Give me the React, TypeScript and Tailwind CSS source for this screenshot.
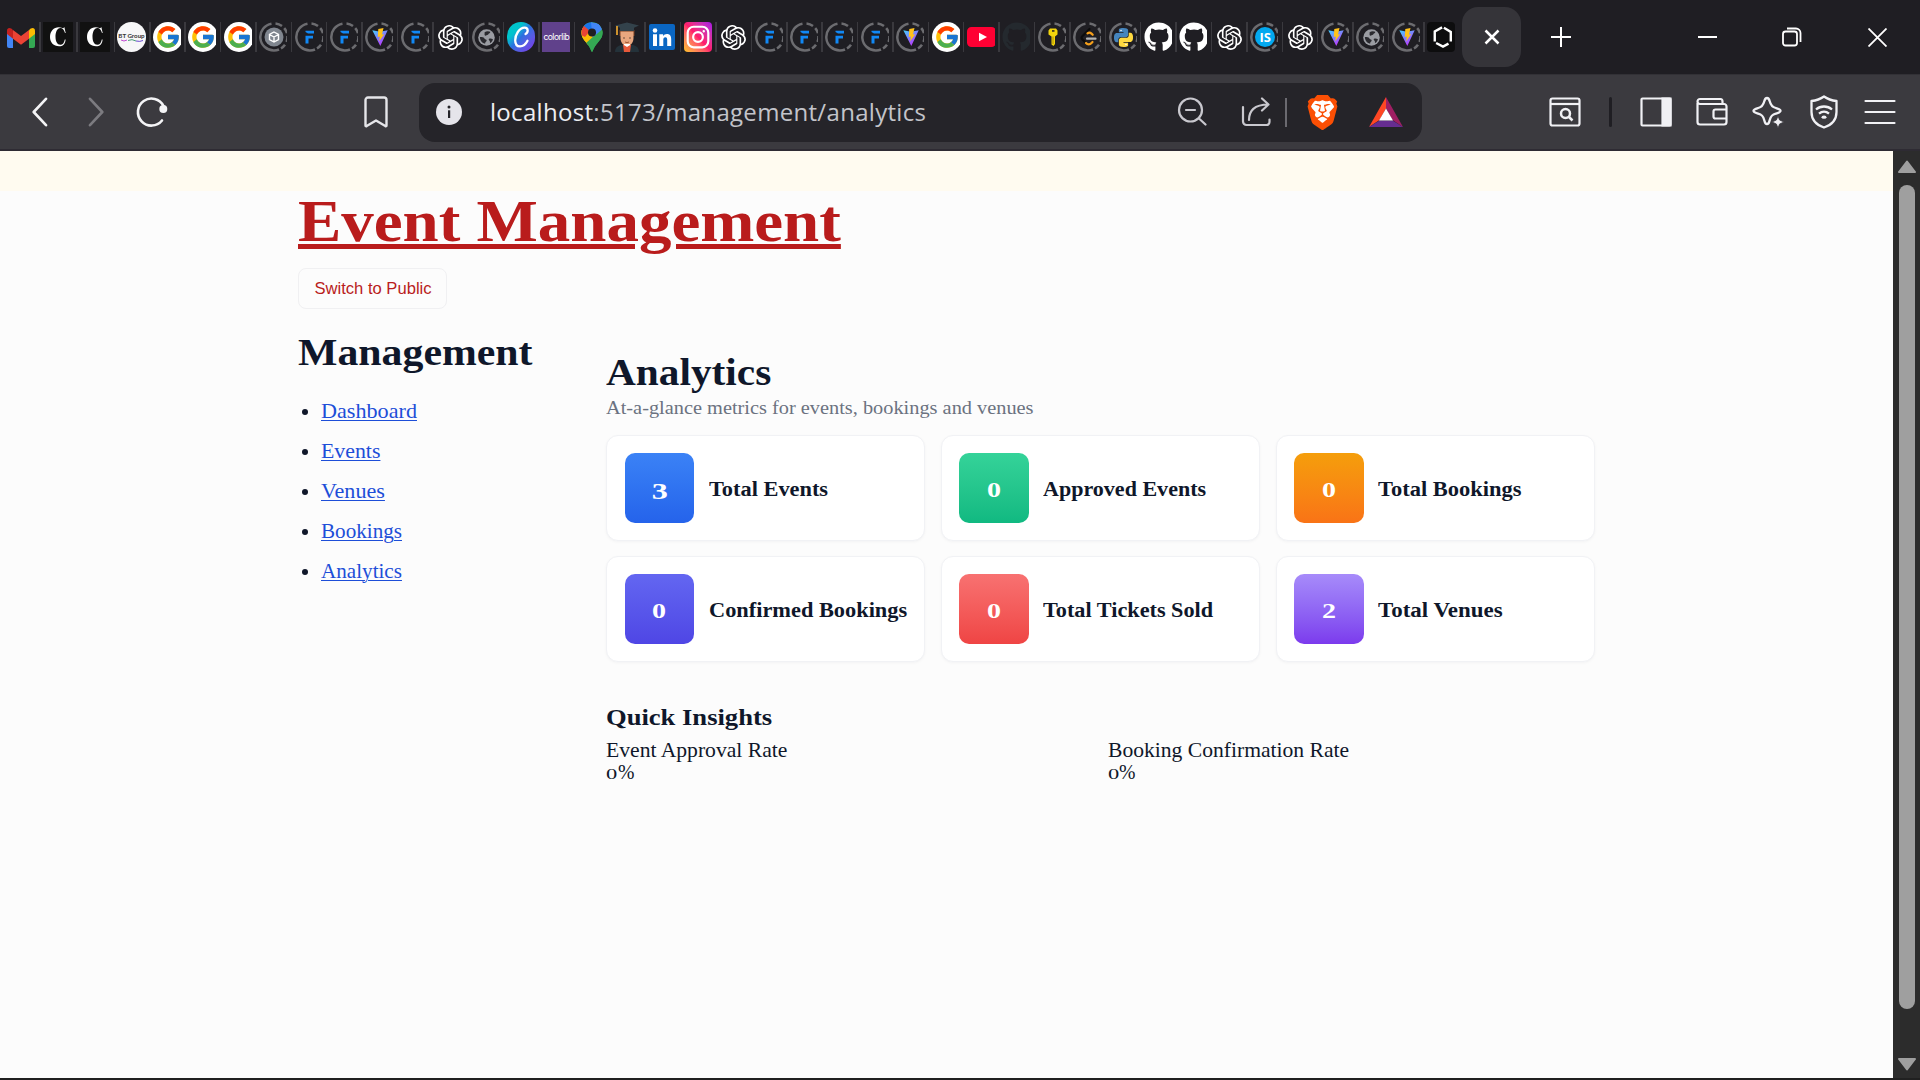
import type { ReactNode } from "react";
import { FcGoogle } from "react-icons/fc";
import { FaGithub } from "react-icons/fa";
import { SiBrave, SiOpenai } from "react-icons/si";

/* ---------- favicons ---------- */

const Gmail = () => (
  <svg viewBox="0 0 28 21" className="h-[21px] w-7">
    <path fill="#4285f4" d="M0 4h6v17H2a2 2 0 0 1-2-2z" />
    <path fill="#34a853" d="M22 4h6v15a2 2 0 0 1-2 2h-4z" />
    <path fill="#fbbc04" d="M22 3.2C24 .2 28 0 28 3.6V7l-6 4.8z" />
    <path fill="#c5221f" d="M6 3.2C4 .2 0 0 0 3.6V7l6 4.8z" />
    <path fill="#ea4335" d="M6 3v8.8l8 6 8-6V3l-8 6z" />
  </svg>
);

const SerifC = () => (
  <div className="flex h-[30px] w-[30px] shrink-0 items-center justify-center bg-[#111]">
    <svg viewBox="0 0 30 30" className="h-[30px] w-[30px]">
      <path
        fill="#fff"
        d="M21.300 5l1.400 6h-.7c-1-3.600-2.700-5.200-4.600-5.100-3.400.2-5 4.300-4.900 9.100.1 4.700 1.800 7.700 4.800 7.700 2.500 0 3.800-1.900 4.500-5.300h.8c-.4 4.700-2.800 6.900-6.500 6.900C10.600 24.300 7 20.500 7 15c0-5.700 3.600-9.700 8.800-9.700 2.300 0 3.500.9 4.300.9.500 0 .8-.5 1.200-1.200z"
      />
    </svg>
  </div>
);

const BtGroup = () => (
  <div className="flex h-[30px] w-[29px] flex-col items-center justify-center rounded-full bg-[#f7f7f8]">
    <span className="font-['Lato'] text-[6.200px] leading-[7px] font-bold text-[#333]">BT Group</span>
    <svg viewBox="0 0 24 3" className="h-[3px] w-6">
      <path d="M1 1q3 2 6 0" stroke="#c04bd0" fill="none" />
      <path d="M8 1.500q4-2 8 .5" stroke="#4a9a7a" fill="none" />
      <path d="M16 2q4 1 7-.5" stroke="#6a4bd0" fill="none" />
    </svg>
  </div>
);

const Google = () => (
  <div className="flex h-[30px] w-[30px] shrink-0 items-center justify-center rounded-full bg-white">
    <FcGoogle className="h-[26px] w-[26px]" />
  </div>
);

const Ring = ({ children }: { children?: ReactNode }) => (
  <div className="relative flex h-[30px] w-[30px] shrink-0 items-center justify-center">
    <svg viewBox="0 0 30 30" className="absolute inset-0 h-[30px] w-[30px]" fill="none" stroke="#6c6c70" strokeWidth="2.500">
      <path d="M15 28.500A13.500 13.500 0 0 1 12.500 1.700" />
      <path d="M16.500 1.600A13.500 13.500 0 0 1 23 4.100M25.200 6.200A13.500 13.500 0 0 1 28 11.200M28.400 14A13.500 13.500 0 0 1 27.600 20M26 22.800A13.500 13.500 0 0 1 22 26.500M20 27.500A13.500 13.500 0 0 1 15 28.500" />
    </svg>
    <div className="relative flex h-5 w-5 items-center justify-center">{children}</div>
  </div>
);

const Cube = () => (
  <Ring>
    <svg viewBox="0 0 20 20" className="h-5 w-5 shrink-0">
      <circle cx="10" cy="10" r="9.500" fill="#80868f" />
      <path d="M10 5l4.500 2.500v5L10 15l-4.500-2.500v-5zM5.500 7.500L10 10l4.500-2.500M10 10v5" fill="none" stroke="#fff" strokeWidth="1.400" />
    </svg>
  </Ring>
);

const Framer = () => (
  <Ring>
    <svg viewBox="0 0 20 20" className="h-5 w-5" fill="#1188f5">
      <path d="M5.500 3.700h8.500v2.800H8L5.500 5zM5.500 8.800H13v2.700H8.500v5h-3z" />
    </svg>
  </Ring>
);

const Vite = () => (
  <Ring>
    <svg viewBox="0 0 20 20" className="h-5 w-5">
      <defs>
        <linearGradient id="vt" x1="0" y1="0" x2=".6" y2="1">
          <stop stopColor="#41d1ff" />
          <stop offset="1" stopColor="#bd34fe" />
        </linearGradient>
      </defs>
      <path fill="url(#vt)" d="M2.300 3.300L10 4.700l7.700-1.400L10.300 19z" />
      <path fill="#ffc21a" d="M13.500 1L8.300 2l-.5 8 2-.4-.6 4.600 5-7-2.200.4z" />
    </svg>
  </Ring>
);

const OpenAi = () => (
  <div className="flex h-[30px] w-[29px] shrink-0 items-center justify-center">
    <SiOpenai className="h-[25px] w-[25px] text-white" />
  </div>
);

const Globe = () => (
  <Ring>
    <svg viewBox="0 0 20 20" className="h-[19px] w-[19px]">
      <circle cx="10" cy="10" r="8.700" fill="#9a9ca2" />
      <path fill="#2a2a2f" d="M3 9.500c2.500 0 4.500.3 5 1.700.5 1.300 2.200.3 2.200 2 0 1.200-1.700 1-1.700 3.300C5.500 16 3 13 3 9.500zM8 4.500c1.800-1.300 4-1.500 6-.5 0 1.700-1.500 1.500-2 2.500s-2 .5-2.500 1.500c-.5.700-2-.3-1.500-1.300zM12.500 11.500c1.200-.8 3-.3 4.300.3-.5 1.900-1.500 3.200-3 4-.5-1.300.2-2-.6-2.500-.7-.5-1.200-1.300-.7-1.800z" />
    </svg>
  </Ring>
);

const Canva = () => (
  <div className="flex h-[30px] w-7 items-center justify-center rounded-full bg-linear-to-br from-[#00c4cc] from-30% via-[#2b6fe0] to-[#7d2ae8]">
    <svg viewBox="0 0 28 30" className="h-[30px] w-7">
      <path
        fill="none"
        stroke="#fff"
        strokeWidth="2.300"
        strokeLinecap="round"
        d="M18.500 12c3-1.500 3-6.300-.8-6.300-5.700 0-9.500 7.300-9.500 12.500 0 4 1.800 6.200 4.800 6.200 3.500 0 6-2.600 7.500-5.600"
      />
    </svg>
  </div>
);

const Colorlib = () => (
  <div className="flex h-[30px] w-7 items-center justify-center overflow-hidden bg-[#60418b]">
    <span className="font-['Inter'] text-[8.500px] tracking-[-0.500px] text-white">colorlib</span>
  </div>
);

const Maps = () => (
  <svg viewBox="0 0 22 30" className="h-[30px] w-[22px]">
    <defs>
      <clipPath id="pin">
        <path d="M11 .3C4.800.3.500 5 .5 10.800c0 4.300 2.200 7 5 10.200 2.200 2.600 4 5.200 4.700 8 .3 1 1.300 1 1.600 0 .7-2.800 2.500-5.400 4.700-8 2.800-3.200 5-5.900 5-10.200C21.500 5 17.200.3 11 .3z" />
      </clipPath>
    </defs>
    <g clipPath="url(#pin)">
      <path fill="#34a853" d="M0 0h22v30H0z" />
      <path fill="#fbbc04" d="M0 6v18L16 8z" />
      <path fill="#fbbc04" d="M0 8L8 8l9 4-12 13H0z" />
      <path fill="#34a853" d="M22 6L4.500 21.500 10 30h12z" />
      <path fill="#4285f4" d="M8 12L19 0l3 7-10 8z" />
      <path fill="#34a853" d="M22 6l-7 8-4 4h11z" />
      <path fill="#1a73e8" d="M3 0h8l3 5-4 6-7-5z" />
      <path fill="#4285f4" d="M10 0l10 2-9 9z" />
      <path fill="#ea4335" d="M0 3l3 1 6 5-5 6-4-2z" />
      <circle cx="11" cy="10.500" r="4" fill="#1f1e23" />
    </g>
  </svg>
);

const Graduate = () => (
  <svg viewBox="0 0 24 30" className="h-[30px] w-6">
    <path fill="#24323a" d="M0 30c0-5 4-7 7-7h10c3 0 7 2 7 7z" />
    <path fill="#e8593a" d="M8 23h8l-1 7H9z" />
    <path fill="#7a3f22" d="M4.500 8h15v6h-15z" />
    <path fill="#e9a77f" d="M5.500 9.500h13V16c0 4-2.500 8-6.500 8s-6.500-4-6.500-8z" />
    <path fill="#fff" d="M9 23l3 2 3-2v-1H9z" />
    <path fill="#33424b" d="M0 3.500L12 .5l12 3-5 2.200V9H5V5.700z" />
    <path d="M2 4v9" stroke="#e0a030" strokeWidth="1.800" />
    <path d="M9 15.500v1M15 15.500v1" stroke="#3a2a20" strokeWidth="1.400" />
    <path d="M10 20q2 1.200 4 0" stroke="#a0522d" fill="none" />
  </svg>
);

const LinkedIn = () => (
  <svg viewBox="0 0 26 26" className="h-[26px] w-[26px]">
    <rect width="26" height="26" rx="2" fill="#0a66c2" />
    <circle cx="6" cy="6.500" r="2.300" fill="#fff" />
    <path fill="#fff" d="M4 10.300h4V22H4zM10.300 10.300h3.800v1.700c.8-1.300 2-2 3.800-2 3.300 0 4.300 2.200 4.300 5.500V22h-4v-5.900c0-1.600-.3-2.800-1.800-2.800-1.600 0-2.100 1.200-2.100 2.800V22h-4z" />
  </svg>
);

const Instagram = () => (
  <div className="flex h-[30px] w-7 items-center justify-center rounded-[4px] bg-linear-to-tr from-[#ffc21a] via-[#ff1a6c] to-[#a800e8]">
    <svg viewBox="0 0 24 24" className="h-[26px] w-[26px]" fill="none" stroke="#fff" strokeWidth="2">
      <rect x="2.500" y="2.500" width="19" height="19" rx="5.500" />
      <circle cx="12" cy="12" r="4.500" />
      <circle cx="17.300" cy="6.700" r=".6" fill="#fff" strokeWidth="1" />
    </svg>
  </div>
);

const YouTube = () => (
  <svg viewBox="0 0 28 20" className="h-5 w-7">
    <rect width="29" height="20" rx="4.500" fill="#ff0033" />
    <path fill="#fff" d="M12 5.700l8 4.300-8 4.300z" />
  </svg>
);

const KeyIcon = () => (
  <Ring>
    <svg viewBox="0 0 20 20" className="h-5 w-5">
      <path fill="#f3d50c" d="M7 1.500h6l1.500 2v4L12 9.500V17l-1.500 2L8.500 17.500V9.500l-3-2v-4z" />
      <path fill="#1f1e23" d="M9 3.200h2.500v1.500H9z" />
      <path fill="#b08f00" d="M9.500 9.500h1V17h-1z" />
    </svg>
  </Ring>
);

const LeetCode = () => (
  <Ring>
    <svg viewBox="0 0 20 20" className="h-5 w-5" fill="none" strokeWidth="2.200" strokeLinecap="round">
      <path stroke="#0c0c0d" d="M11.500 2L4.300 9.200c-1 1-1 2.200 0 3.200L8 16" />
      <path stroke="#f59f1b" d="M8 16c1.500 1.800 4 1.800 5.500 0l1-1M9.500 6.300c1.300-1 3-.7 4 .3l1.200 1.200" />
      <path stroke="#b3b3b3" d="M9 11.700h8.500" />
    </svg>
  </Ring>
);

const snake =
  "M14.250.180l.900.200.730.260.590.300.450.320.340.340.250.340.160.330.100.300.040.260.020.200-.010.130V8.500l-.050.630-.130.550-.210.460-.260.380-.300.310-.330.250-.350.190-.350.140-.330.100-.300.070-.260.040-.210.020H8.770l-.690.050-.590.140-.500.220-.410.270-.330.320-.270.350-.200.360-.150.370-.100.350-.070.320-.040.270-.020.210v3.060H3.170l-.210-.030-.280-.070-.320-.120-.350-.180-.360-.260-.360-.360-.350-.460-.320-.590-.280-.730-.210-.880-.140-1.050-.050-1.230.060-1.220.160-1.040.240-.870.320-.710.360-.570.400-.440.420-.330.420-.240.400-.160.360-.100.320-.050.240-.010h8.380v-.830H6.180l-.010-2.750-.020-.370.050-.340.110-.310.170-.280.250-.260.310-.230.380-.200.440-.180.510-.150.580-.120.640-.100.710-.060.770-.040.840-.020z";

const Python = () => (
  <Ring>
    <svg viewBox="0 0 24 24" className="h-[19px] w-[19px]">
      <path fill="#4585bd" d={snake} />
      <path fill="#ffd940" d={snake} transform="rotate(180 12 12)" />
      <circle cx="8.900" cy="3.200" r="1" fill="#fff" />
      <circle cx="15.100" cy="20.800" r="1" fill="#fff" />
    </svg>
  </Ring>
);

const GitHub = () => <FaGithub className="h-[30px] w-[30px] shrink-0 text-white" />;
const GitHubDim = () => <FaGithub className="h-[30px] w-[30px] shrink-0 text-[#24292e]" />;

const InfoSoft = () => (
  <Ring>
    <div className="flex h-5 w-5 shrink-0 items-center justify-center rounded-full bg-[#03a9f0]">
      <span className="font-['Open_Sans'] text-[13px] leading-none font-bold text-white">IS</span>
    </div>
  </Ring>
);

const Hexagon = () => (
  <div className="flex h-[30px] w-7 items-center justify-center rounded-[4px] bg-[#0d0d0e]">
    <svg viewBox="0 0 24 26" className="ml-[3px] h-6 w-[22px]" fill="none" stroke="#fff" strokeWidth="2.600">
      <path d="M11 2.500L3 7v11M4.500 19.500L12 23.500l6-3.300M20.500 18V7.500L13 3" />
    </svg>
  </div>
);

const favicons = [
  Google, Google, Google, Cube, Framer, Framer, Vite, Framer, OpenAi, Globe, Canva, Colorlib, Maps,
  Graduate, LinkedIn, Instagram, OpenAi, Framer, Framer, Framer, Framer, Vite, Google, YouTube,
  GitHubDim, KeyIcon, LeetCode, Python, GitHub, GitHub, OpenAi, InfoSoft, OpenAi, Vite, Globe, Vite, Hexagon,
];

const centered = new Set([Maps, Graduate, LinkedIn]);

const Divider = () => <div className="h-[30px] w-[1.500px] shrink-0 bg-[#3a393e]" />;

const TabStrip = () => (
  <div className="flex h-[74px] items-center bg-[#1f1e23]">
    <div className="flex w-[39px] shrink-0 pl-[7px]"><Gmail /></div>
    <Divider />
    <div className="flex w-[35.500px] shrink-0 pl-[2.500px]"><SerifC /></div>
    <Divider />
    <div className="flex w-[36px] shrink-0 pl-[2.500px]"><SerifC /></div>
    <Divider />
    <div className="flex w-[34px] shrink-0 pl-[2px]"><BtGroup /></div>
    {favicons.map((Icon, i) => (
      <div key={i} className="flex w-[35.400px] shrink-0 items-center">
        <Divider />
        <div
          className={
            centered.has(Icon)
              ? "ml-[2.500px] flex h-[30px] w-7 items-center justify-center overflow-hidden"
              : "ml-[2.500px] flex h-[30px] w-7 items-center overflow-hidden"
          }
        >
          <Icon />
        </div>
      </div>
    ))}
    <div className="ml-1 flex h-[60px] w-[59px] shrink-0 items-center justify-center rounded-2xl bg-[#353439]">
      <svg viewBox="0 0 16 16" className="h-4 w-4" stroke="#fff" strokeWidth="2.500"><path d="M1.500 1.500l13 13M14.500 1.500l-13 13" /></svg>
    </div>
    <svg viewBox="0 0 20 20" className="ml-[30px] h-5 w-5 shrink-0" stroke="#fff" strokeWidth="2"><path d="M10 0v20M0 10h20" /></svg>
    <div className="ml-auto flex shrink-0 items-center pr-[33px]">
      <svg viewBox="0 0 20 20" className="mr-[64px] h-5 w-5" stroke="#fff" strokeWidth="2"><path d="M0 10h19" /></svg>
      <svg viewBox="0 0 20 20" className="mr-[66px] h-5 w-5" fill="none" stroke="#fff" strokeWidth="1.800">
        <rect x="1" y="4.500" width="14" height="14" rx="2.500" />
        <path d="M5 1.500h9a4.500 4.500 0 0 1 4.500 4.500v9" />
      </svg>
      <svg viewBox="0 0 19 19" className="h-[19px] w-[19px]" stroke="#fff" strokeWidth="1.800"><path d="M.5.500l18 18M18.500.500l-18 18" /></svg>
    </div>
  </div>
);

/* ---------- toolbar ---------- */

const Toolbar = () => (
  <div className="flex h-[77px] items-center border-t border-b-2 border-t-[#323136] border-b-[#2e2b33] bg-[#3b3a3f]">
    <svg viewBox="0 0 16 30" className="ml-[32px] h-[30px] w-4 shrink-0" fill="none" stroke="#f4f4f6" strokeWidth="2.600" strokeLinecap="round" strokeLinejoin="round"><path d="M14 1.800L1.700 15 14 28.200" /></svg>
    <svg viewBox="0 0 16 30" className="ml-10 h-[30px] w-4 shrink-0" fill="none" stroke="#7c7b80" strokeWidth="2.600" strokeLinecap="round" strokeLinejoin="round"><path d="M2 1.800L14.300 15 2 28.200" /></svg>
    <svg viewBox="0 0 32 32" className="ml-8 h-8 w-8 shrink-0" fill="none" stroke="#f4f4f6" strokeWidth="2.600" strokeLinecap="round">
      <path d="M26 24.500A13.500 13.500 0 1 1 27.500 10" />
      <circle cx="27.300" cy="13" r="4" fill="#f4f4f6" stroke="none" />
    </svg>
    <svg viewBox="0 0 24 32" className="ml-[196px] h-8 w-6 shrink-0" fill="none" stroke="#e6e6ea" strokeWidth="2.400" strokeLinejoin="round"><path d="M1.500 4a2.500 2.500 0 0 1 2.500-2.500h16A2.500 2.500 0 0 1 22.500 4v25.500c0 .8-.6 1-1.200.5L12 24.500 2.700 30c-.6.500-1.200.300-1.200-.5z" /></svg>

    <div className="ml-[31px] flex h-[59px] w-[1003px] shrink-0 items-center rounded-2xl bg-[#252429]">
      <div className="ml-[17px] flex h-[26px] w-[26px] items-center justify-center rounded-full bg-[#e5e4ea]">
        <svg viewBox="0 0 6 14" className="h-[14px] w-1.5" fill="#252429"><circle cx="3" cy="2" r="1.500" /><path d="M2 5.300h2.200V13H2z" /></svg>
      </div>
      <div className="ml-[28px] w-[660px] pb-px font-['Open_Sans'] text-[24px] tracking-[0.310px] text-[#c3c4ca]">
        <span className="text-[#eeeef2]">localhost</span>:5173/management/analytics
      </div>
      <svg viewBox="0 0 30 30" className="ml-[27px] h-[30px] w-[30px]" fill="none" stroke="#c9c8ce" strokeWidth="2.200" strokeLinecap="round">
        <circle cx="13.500" cy="13" r="11.500" /><path d="M9 13h9M22 21.500l6.500 6" />
      </svg>
      <svg viewBox="0 0 30 30" className="ml-[34px] h-[30px] w-[30px]" fill="none" stroke="#c9c8ce" strokeWidth="2.200" strokeLinecap="round" strokeLinejoin="round">
        <path d="M2 10v14.500A3.500 3.500 0 0 0 5.500 28h20a3 3 0 0 0 3-3v-2.500M8 23c0-9 5-15.500 19.500-15.500M21 1.500l6.500 6-6.500 6" />
      </svg>
      <div className="ml-[14px] h-[29px] w-[1.500px] bg-[#6b6a70]" />
      <div className="relative ml-[20px] flex h-9 w-8 items-center justify-center">
        <svg viewBox="0 0 32 36" className="absolute inset-0 h-9 w-8"><path fill="#fff" d="M6 6h20l2 6-3 14-9 6-9-6L4 12z" /></svg>
        <SiBrave className="relative h-[35px] w-[35px] shrink-0 text-[#fb4f04]" />
      </div>
      <svg viewBox="0 0 34 30" className="ml-[30px] h-[30px] w-[34px]">
        <path fill="#ff4724" d="M17 0v11.500L10.500 23 0 30z" />
        <path fill="#9e1f63" d="M17 0v11.500L23.500 23 34 30z" />
        <path fill="#662d91" d="M0 30l10.500-6.500h13L34 30z" />
        <path fill="#fff" d="M17 11.500l7 12H10z" />
      </svg>
    </div>

    <div className="ml-auto flex shrink-0 items-center pr-[24px] text-[#f1f1f5]">
      <svg viewBox="0 0 32 30" className="h-[30px] w-8" fill="none" stroke="currentColor" strokeWidth="2.200">
        <rect x="1.500" y="1.500" width="29" height="27" rx="2" /><path d="M1.500 7h29" />
        <circle cx="16.500" cy="16.500" r="4.500" strokeWidth="2.500" /><path d="M19.500 19.500l4 4" strokeWidth="2.500" />
      </svg>
      <div className="ml-[28px] h-[30px] w-[3px] rounded-full bg-[#1f1e23]" />
      <svg viewBox="0 0 32 30" className="ml-[28px] h-[30px] w-8" fill="none" stroke="currentColor" strokeWidth="2.200">
        <rect x="1.500" y="1.500" width="29" height="27" rx="1" /><path d="M22.500 1.500h8v27h-8z" fill="currentColor" />
      </svg>
      <svg viewBox="0 0 32 30" className="ml-6 h-[30px] w-8" fill="none" stroke="currentColor" strokeWidth="2.200" strokeLinejoin="round">
        <path d="M1.500 6v19A2.500 2.500 0 0 0 4 27.500h24a2.500 2.500 0 0 0 2.500-2.500V9.500A2.500 2.500 0 0 0 28 7H4a2.500 2.500 0 0 1 0-5h20.500q2 0 2 2.500V7" />
        <path d="M30.500 12.500H19.500a2 2 0 0 0-2 2v5a2 2 0 0 0 2 2h11" />
      </svg>
      <svg viewBox="0 0 32 32" className="ml-6 h-8 w-8" fill="none" stroke="currentColor" strokeWidth="2.300" strokeLinejoin="round">
        <path d="M15 2c1.500 0 2.200 1 2.800 3.500 1 4 2.200 5.500 6 6.500 3 .8 4.700 1.200 4.700 2.800s-1.700 2-4.700 2.800c-3.800 1-5 2.300-6 6.300-.6 2.500-1.300 4.300-2.800 4.300s-2.200-1.800-2.800-4.300c-1-4-2.200-5.300-6-6.300-3-.8-4.700-1.200-4.700-2.800s1.700-2 4.700-2.800c3.800-1 5-2.500 6-6.500C12.800 3 13.500 2 15 2z" />
        <path d="M26 20l1.600 4 4.400 2-4.400 2L26 32l-1.600-4-4.400-2 4.400-2z" fill="currentColor" stroke="#3b3a3f" strokeWidth=".8" />
      </svg>
      <svg viewBox="0 0 28 34" className="ml-[26px] h-[34px] w-7" fill="none" stroke="currentColor" strokeWidth="2.300" strokeLinejoin="round">
        <path d="M14 1.500c3.500 2.500 7.500 4 12.500 4.500v11c0 7.500-5 13-12.500 15.500C6.500 30 1.500 24.500 1.500 17V6C6.500 5.500 10.500 4 14 1.500z" />
        <path d="M6 14.500c4.500-4 11.500-4 16 0M9 18.700c3-2.600 7-2.600 10 0" />
        <ellipse cx="14" cy="22.200" rx="2.500" ry="1.600" fill="currentColor" stroke="none" />
      </svg>
      <svg viewBox="0 0 32 28" className="ml-[26px] h-7 w-8" stroke="currentColor" strokeWidth="2.200" strokeLinecap="round"><path d="M1.500 3h29M1.500 14h29M1.500 25h29" /></svg>
    </div>
  </div>
);

/* ---------- page ---------- */

const links = [
  { label: "Dashboard", fit: "scale-x-[1.055]" },
  { label: "Events", fit: "scale-x-[1.040]" },
  { label: "Venues", fit: "scale-x-[1.054]" },
  { label: "Bookings", fit: "scale-x-[1.006]" },
  { label: "Analytics", fit: "scale-x-[1.006]" },
];

const low = "text-[20px] translate-y-[1.500px]";
const metrics = [
  { label: "Total Events", value: "3", fit: "scale-x-[1.118]", tile: "from-[#3b82f6] to-[#2563eb]", digit: "text-[23px] translate-y-[3px]" },
  { label: "Approved Events", value: "0", fit: "scale-x-[1.102]", tile: "from-[#34d399] to-[#10b981]", digit: low },
  { label: "Total Bookings", value: "0", fit: "scale-x-[1.124]", tile: "from-[#f59e0b] to-[#f97316]", digit: low },
  { label: "Confirmed Bookings", value: "0", fit: "scale-x-[1.118]", tile: "from-[#6366f1] to-[#4f46e5]", digit: low },
  { label: "Total Tickets Sold", value: "0", fit: "scale-x-[1.112]", tile: "from-[#f87171] to-[#ef4444]", digit: low },
  { label: "Total Venues", value: "2", fit: "scale-x-[1.146]", tile: "from-[#a78bfa] to-[#7c3aed]", digit: low },
];

const Percent = () => (
  <p className="flex h-[22px] items-baseline leading-[22px]">
    <span className="w-[11.500px]"><span className="inline-block origin-left scale-x-[1.450] text-[15.500px]">0</span></span>
    <span className="inline-block origin-left scale-x-[0.940] text-[21px]">%</span>
  </p>
);

const Page = () => (
  <main className="min-w-0 flex-1 bg-[#fcfcfc] font-['Liberation_Serif',serif] whitespace-nowrap text-[#0f172a]">
    <div className="h-10 bg-[#fffbf0]" />
    <div className="pl-[298px]">
      <h1 className="h-[60px] pt-px text-[58.500px] leading-[60px] font-bold text-[#b91c1c]">
        <a className="inline-block origin-left scale-x-[1.110] underline decoration-[5px] underline-offset-[3px]">Event Management</a>
      </h1>
      <button className="mt-[17px] flex h-[41px] w-[149px] items-center justify-center rounded-lg border border-[#f0f0f2] pt-0.5 pl-px font-['Liberation_Sans',sans-serif] text-[16.600px] text-[#b91c1c]">
        Switch to Public
      </button>
      <div className="flex pt-[21px]">
        <aside className="w-[308px] shrink-0">
          <h2 className="h-11 origin-left scale-x-[1.100] text-[38px] leading-[44px] font-bold">Management</h2>
          <ul className="mt-[17.500px]">
            {links.map((l) => (
              <li key={l.label} className="flex h-10 items-center text-[21px] text-[#1d4ed8]">
                <span className="mt-px mr-[13px] ml-1 h-1.5 w-1.5 rounded-full bg-[#0f172a]" />
                <a className={`origin-left underline decoration-1 underline-offset-[2px] ${l.fit}`}>{l.label}</a>
              </li>
            ))}
          </ul>
        </aside>
        <section className="w-[988.500px] pt-5">
          <h2 className="h-11 origin-left text-[38px] leading-[44px] font-bold">
            <span className="inline-block origin-left scale-x-[1.087]">Analytics</span>
          </h2>
          <p className="mt-0.5 h-6 w-[410px] origin-left scale-x-[1.043] text-[19.500px] leading-6 text-[#6b7280]">
            At-a-glance metrics for events, bookings and venues
          </p>
          <div className="mt-[15px] grid grid-cols-3 gap-x-4 gap-y-[15px]">
            {metrics.map((m) => (
              <div key={m.label} className="flex h-[106px] items-center rounded-xl border border-[#f1f2f5] bg-white px-[17.500px] shadow-[0_1px_3px_rgba(15,23,42,0.04)]">
                <div className={`flex h-[70px] w-[69.500px] shrink-0 items-center justify-center rounded-[10px] bg-linear-to-b font-bold text-white ${m.tile}`}>
                  <span className={`scale-x-[1.400] leading-none ${m.digit}`}>{m.value}</span>
                </div>
                <span className={`mt-px ml-[14.500px] origin-left text-[20px] font-bold ${m.fit}`}>{m.label}</span>
              </div>
            ))}
          </div>
          <h3 className="mt-[41px] h-7 text-[24px] leading-7 font-bold">
            <span className="inline-block origin-left scale-x-[1.107]">Quick Insights</span>
          </h3>
          <div className="mt-[8px] grid grid-cols-2 gap-[15px] text-[21px] leading-[22px]">
            <div>
              <p><span className="inline-block origin-left scale-x-[1.030]">Event Approval Rate</span></p>
              <Percent />
            </div>
            <div>
              <p><span className="inline-block origin-left scale-x-[1.028]">Booking Confirmation Rate</span></p>
              <Percent />
            </div>
          </div>
        </section>
      </div>
    </div>
  </main>
);

const Scrollbar = () => (
  <div className="flex w-[27px] shrink-0 flex-col items-center bg-[#2c2c2c] pt-[9px] pb-[7px]">
    <svg viewBox="0 0 18 13" className="h-[13px] w-[18px]" fill="#9f9f9f" stroke="#9f9f9f" strokeWidth="2" strokeLinejoin="round"><path d="M9 1.500L17 12H1z" /></svg>
    <div className="mt-3 h-[824px] w-4 rounded-full bg-[#9f9f9f]" />
    <svg viewBox="0 0 18 13" className="mt-auto h-[13px] w-[18px]" fill="#9f9f9f" stroke="#9f9f9f" strokeWidth="2" strokeLinejoin="round"><path d="M9 11.500L17 1H1z" /></svg>
  </div>
);

export default function App() {
  return (
    <div className="flex h-[1080px] w-[1920px] flex-col overflow-hidden bg-[#202020]">
      <TabStrip />
      <Toolbar />
      <div className="flex h-[927px]">
        <Page />
        <Scrollbar />
      </div>
    </div>
  );
}
